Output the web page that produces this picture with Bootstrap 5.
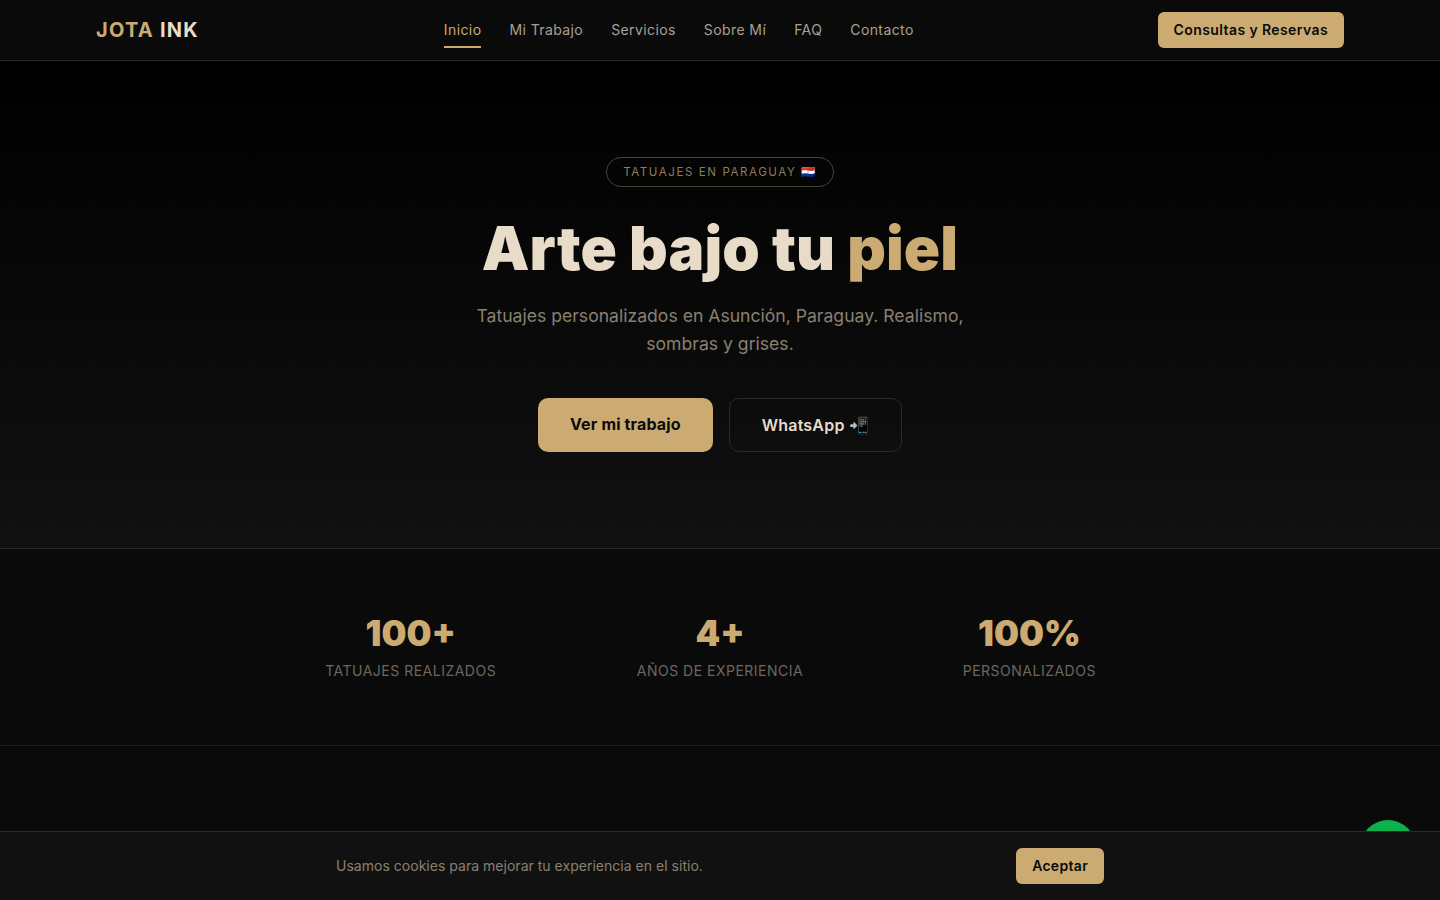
<!DOCTYPE html>
<html lang="es">
<head>
  <meta charset="UTF-8">
  <title>Jota Ink</title>
  <meta name="viewport" content="width=device-width, initial-scale=1">

  <link href="https://cdn.jsdelivr.net/npm/bootstrap@5.3.2/dist/css/bootstrap.min.css" rel="stylesheet">

  <style>
    body {
      font-family: Inter, "Liberation Sans", sans-serif;
      background-color: #0a0a0a;
      color: #e8dcc8;
      height: 900px;
      overflow: hidden;
    }

    .top-bar {
      height: 61px;
      background-color: #0a0a0a;
      border-bottom: 1px solid #2a2a2a;
      padding: 0 96px;
    }

    .brand-name {
      font-size: 20px;
      font-weight: 700;
      letter-spacing: 1.25px;
      color: #e8dcc8;
      text-decoration: none;
    }

    .gold-text { color: #cbab72; }

    .menu-link {
      font-size: 14px;
      letter-spacing: 0.4px;
      color: #a8a095;
      text-decoration: none;
      padding: 7px 0 6px;
      border-bottom: 2px solid transparent;
    }

    .menu-link.is-current {
      color: #cbab72;
      border-bottom-color: #cbab72;
    }

    .menu-links { gap: 28px; margin-left: 1px; }

    .btn-gold {
      background-color: #cbab72;
      border: 0;
      color: #0a0a0a;
      font-weight: 600;
    }

    .btn-gold:hover { background-color: #cbab72; color: #0a0a0a; }

    .btn-reserve {
      font-size: 14px;
      letter-spacing: 0.4px;
      line-height: 20px;
      padding: 0 16px;
      height: 36px;
      border-radius: 6px;
    }

    .hero-block {
      height: 488px;
      padding-top: 96px;
      border-bottom: 1px solid #2a2a2a;
      background-image:
        radial-gradient(circle at 10px 22px, rgba(201, 169, 110, 0.06) 1px, transparent 1.5px),
        linear-gradient(180deg, #000 0%, #111 100%);
      background-size: 40px 40px, 100% 100%;
    }

    .hero-tag {
      font-size: 11.5px;
      letter-spacing: 1.6px;
      color: #8f7c58;
      border: 1px solid #4a4030;
      border-radius: 50px;
      padding: 1px 16px 0;
      height: 30px;
    }

    .hero-title {
      font-size: 60px;
      font-weight: 900;
      line-height: 70px;
      letter-spacing: 0.1px;
      color: #e8dcc8;
      margin: 26px 0 0;
    }

    .hero-sub {
      font-size: 17.6px;
      line-height: 28px;
      color: #8a8070;
      width: 520px;
      margin: 19px 0 0;
    }

    .hero-actions { gap: 16px; margin-top: 40px; }

    .hero-btn {
      height: 54px;
      font-size: 16px;
      letter-spacing: 0.2px;
      border-radius: 10px;
      padding: 0 32px;
    }

    .btn-gold.hero-btn { font-weight: 700; padding-bottom: 2px; letter-spacing: 0.15px; }

    .btn-dark-outline {
      background-color: transparent;
      border: 1px solid #2a2a2a;
      color: #e8dcc8;
      font-weight: 600;
    }

    .stats-block {
      height: 197px;
      border-bottom: 1px solid #1e1e1e;
      padding-top: 62px;
      background-color: #0a0a0a;
    }

    .stats-grid { width: 928px; margin: 0 auto; }

    .stat-num {
      font-size: 35.2px;
      font-weight: 900;
      line-height: 44px;
      color: #cbab72;
    }

    .stat-label {
      font-size: 14px;
      letter-spacing: 0.5px;
      line-height: 20px;
      color: #6e675f;
      margin-top: 6px;
    }

    .cookie-bar {
      position: fixed;
      left: 0;
      right: 0;
      bottom: 0;
      height: 69px;
      background-color: #111;
      border-top: 1px solid #2a2a2a;
      padding: 0 336px;
      z-index: 20;
    }

    .cookie-text {
      font-size: 14px;
      line-height: 20px;
      letter-spacing: 0.02px;
      color: #8a8070;
    }

    .btn-accept {
      font-size: 14px;
      letter-spacing: 0.3px;
      line-height: 20px;
      height: 36px;
      padding: 0 16px;
      border-radius: 6px;
    }

    .wa-float {
      position: fixed;
      left: 1360px;
      top: 820px;
      width: 56px;
      height: 56px;
      border-radius: 50%;
      background-color: #0cb14b;
      z-index: 10;
    }
  </style>
</head>
<body>
  <!-- Top navigation -->
  <nav class="top-bar d-flex align-items-center justify-content-between">
    <a class="brand-name" href="#"><span class="gold-text">JOTA</span> INK</a>
    <div class="menu-links d-flex align-items-center">
      <a class="menu-link is-current" href="#">Inicio</a>
      <a class="menu-link" href="#">Mi Trabajo</a>
      <a class="menu-link" href="#">Servicios</a>
      <a class="menu-link" href="#">Sobre Mí</a>
      <a class="menu-link" href="#">FAQ</a>
      <a class="menu-link" href="#">Contacto</a>
    </div>
    <a class="btn btn-gold btn-reserve d-flex align-items-center" href="#">Consultas y Reservas</a>
  </nav>

  <!-- Hero -->
  <section class="hero-block d-flex flex-column align-items-center text-center">
    <div class="hero-tag d-inline-flex align-items-center">TATUAJES EN PARAGUAY 🇵🇾</div>
    <h1 class="hero-title">Arte bajo tu <span class="gold-text">piel</span></h1>
    <p class="hero-sub">Tatuajes personalizados en Asunción, Paraguay. Realismo, sombras y grises.</p>
    <div class="hero-actions d-flex">
      <a class="btn btn-gold hero-btn d-flex align-items-center" href="#">Ver mi trabajo</a>
      <a class="btn btn-dark-outline hero-btn d-flex align-items-center" href="#">WhatsApp 📲</a>
    </div>
  </section>

  <!-- Stats -->
  <section class="stats-block text-center">
    <div class="stats-grid row g-0">
      <div class="col-4">
        <div class="stat-num">100+</div>
        <div class="stat-label">TATUAJES REALIZADOS</div>
      </div>
      <div class="col-4">
        <div class="stat-num">4+</div>
        <div class="stat-label">AÑOS DE EXPERIENCIA</div>
      </div>
      <div class="col-4">
        <div class="stat-num">100%</div>
        <div class="stat-label">PERSONALIZADOS</div>
      </div>
    </div>
  </section>

  <a class="wa-float" href="#" aria-label="WhatsApp"></a>

  <!-- Cookie notice -->
  <div class="cookie-bar d-flex align-items-center justify-content-between">
    <span class="cookie-text">Usamos cookies para mejorar tu experiencia en el sitio.</span>
    <button class="btn btn-gold btn-accept" type="button">Aceptar</button>
  </div>
</body>
</html>
